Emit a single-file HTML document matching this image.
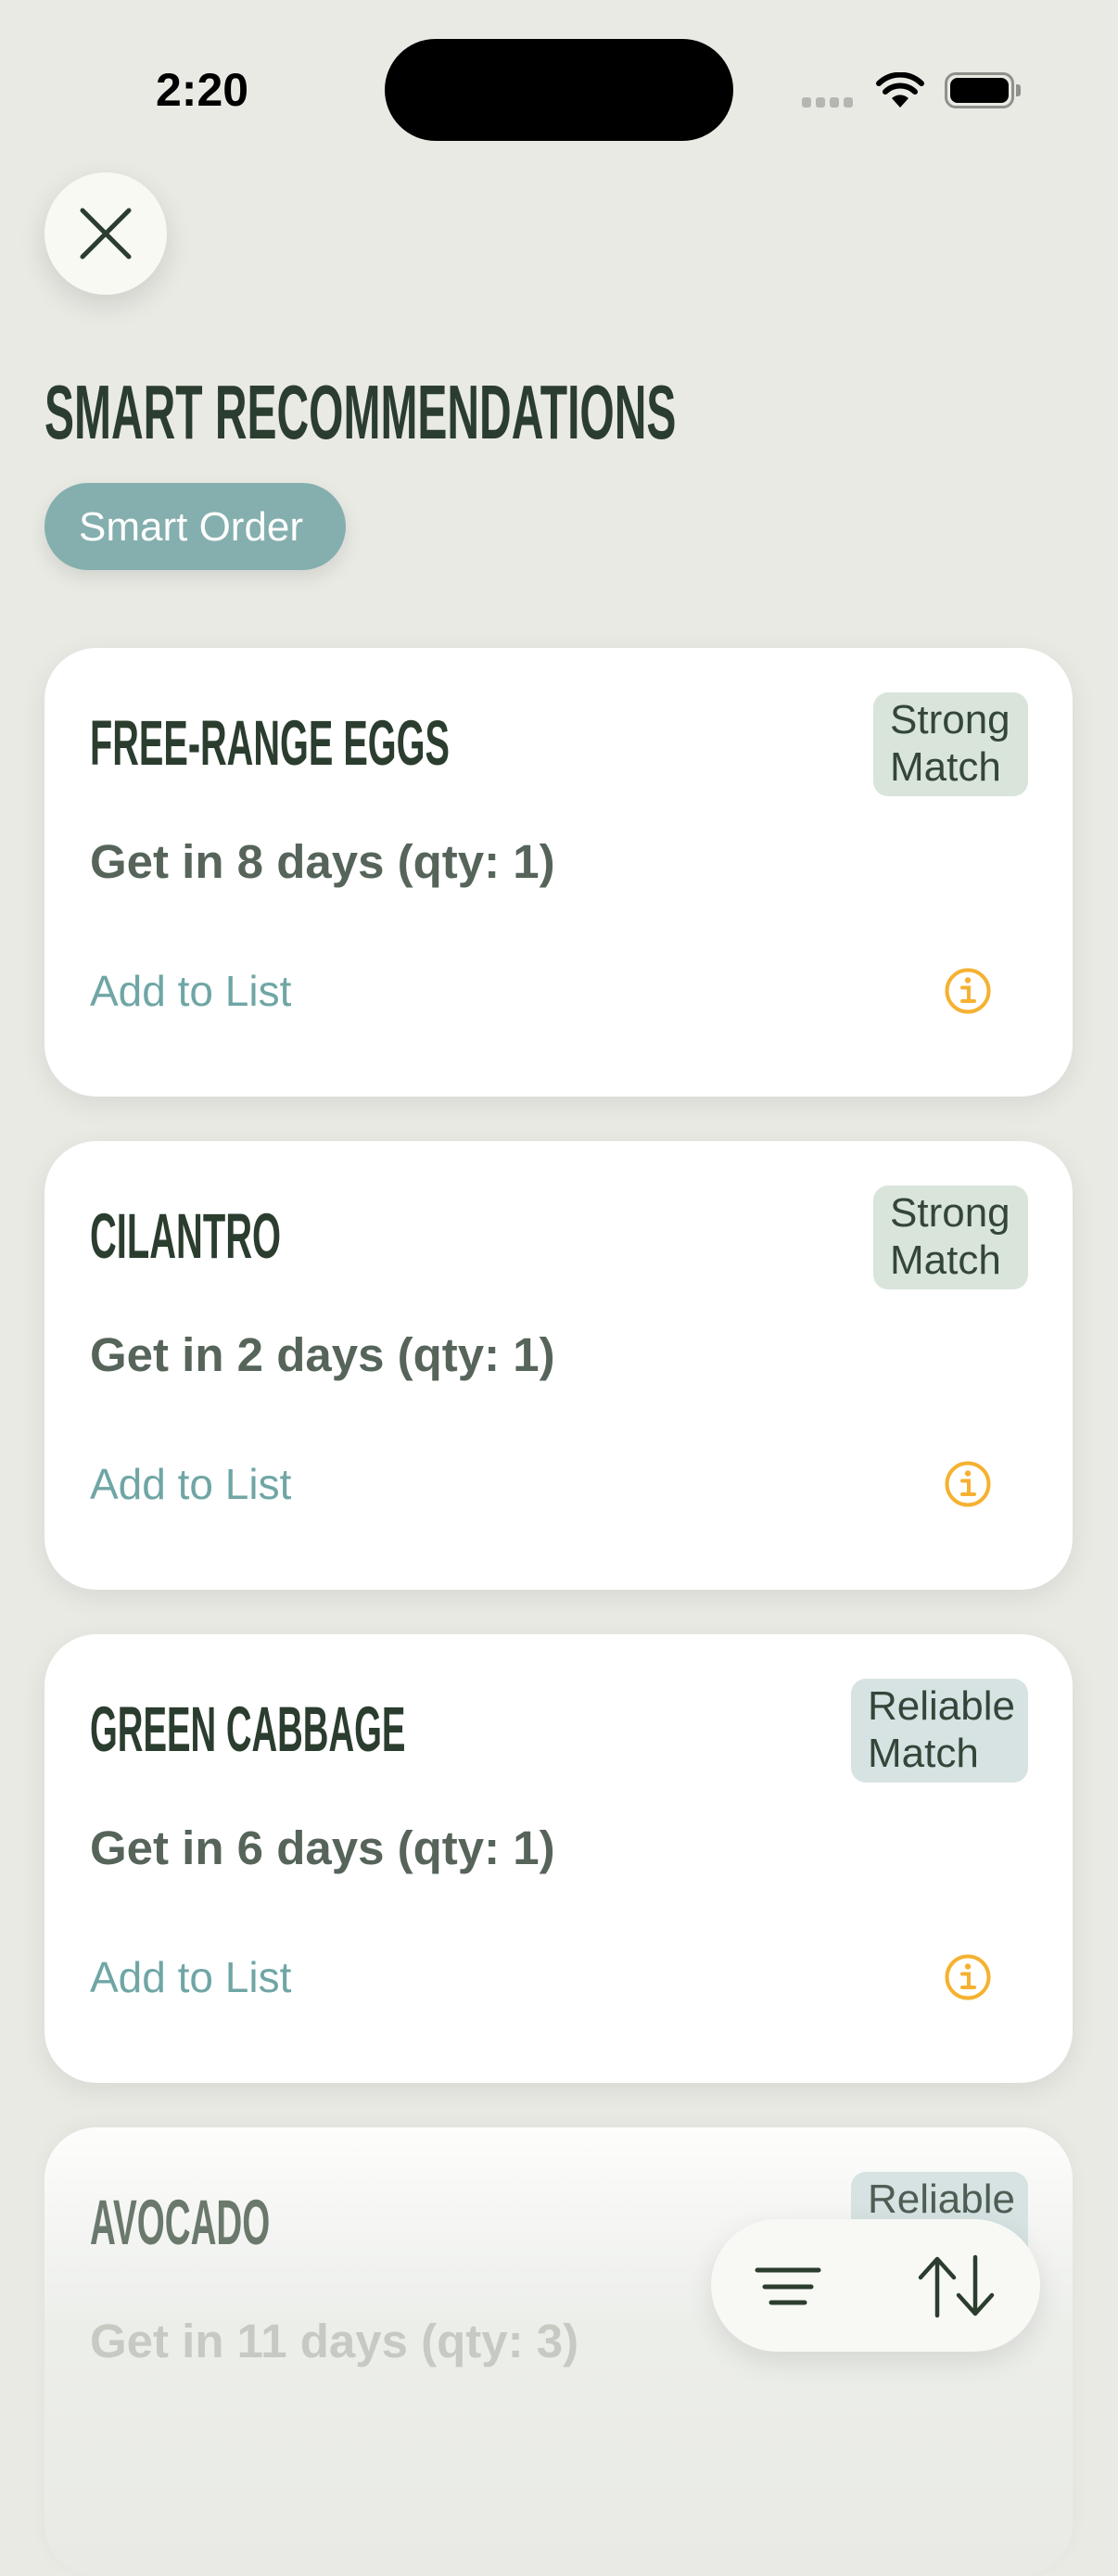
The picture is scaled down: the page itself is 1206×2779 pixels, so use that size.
<!DOCTYPE html>
<html><head><meta charset="utf-8">
<style>
*{margin:0;padding:0;box-sizing:border-box}
html,body{width:1206px;height:2622px;overflow:hidden;background:#e9eae4;font-family:"Liberation Sans",sans-serif}
.abs{position:absolute;line-height:1;white-space:nowrap}
.cond{font-weight:bold;color:#2b3d2e;transform-origin:0 0;display:inline-block}
.card{position:absolute;left:48px;width:1109px;height:484px;border-radius:56px;background:#fff;box-shadow:0 8px 30px rgba(0,0,0,0.08)}
.card .t{position:absolute;left:49px;top:68px;font-size:69px;line-height:1;white-space:nowrap}
.card .g{position:absolute;left:49px;top:205px;font-size:51px;font-weight:bold;color:#56645a;line-height:1;white-space:nowrap}
.card .a{position:absolute;left:49px;top:347px;font-size:46px;color:#6fa6a5;line-height:1;white-space:nowrap}
.badge{position:absolute;top:48px;height:112px;border-radius:16px;background:#d9e4da;padding:4px 0 0 18px;font-size:44px;line-height:51px;color:#34463a}
.badge.r{background:#d6e3e2}
.info{position:absolute;left:971px;top:345px}
</style></head><body>
<div class="abs" style="left:168px;top:72px;font-size:50px;font-weight:bold;color:#000">2:20</div>
<div style="position:absolute;left:415px;top:42px;width:376px;height:110px;border-radius:55px;background:#000"></div>
<div style="position:absolute;left:865px;top:105px;width:10px;height:11px;border-radius:3px;background:#b5b5b2"></div>
<div style="position:absolute;left:880px;top:105px;width:10px;height:11px;border-radius:3px;background:#b5b5b2"></div>
<div style="position:absolute;left:895px;top:105px;width:10px;height:11px;border-radius:3px;background:#b5b5b2"></div>
<div style="position:absolute;left:910px;top:105px;width:10px;height:11px;border-radius:3px;background:#b5b5b2"></div>
<svg style="position:absolute;left:944px;top:78px" width="54" height="40" viewBox="0 0 54 40">
<path d="M27 38 L18 28 A13 13 0 0 1 36 28 Z" fill="#000"/>
<path d="M11 21 A23 23 0 0 1 43 21" stroke="#000" stroke-width="6" fill="none" stroke-linecap="round"/>
<path d="M4 12 A33 33 0 0 1 50 12" stroke="#000" stroke-width="6" fill="none" stroke-linecap="round"/>
</svg>
<div style="position:absolute;left:1019px;top:78px;width:75px;height:39px;border-radius:12px;border:3px solid #8f8f8c"></div>
<div style="position:absolute;left:1025px;top:84px;width:63px;height:27px;border-radius:8px;background:#000"></div>
<div style="position:absolute;left:1096px;top:91px;width:5px;height:13px;border-radius:0 3px 3px 0;background:#8f8f8c"></div>
<div style="position:absolute;left:48px;top:186px;width:132px;height:132px;border-radius:50%;background:#f8f9f3;box-shadow:0 10px 30px rgba(0,0,0,0.12)"></div>
<svg style="position:absolute;left:84px;top:222px" width="60" height="60" viewBox="0 0 60 60"><path d="M5 5 L55 55 M55 5 L5 55" stroke="#2b3d2e" stroke-width="5" stroke-linecap="round"/></svg>
<div class="abs" style="left:48px;top:403px"><span class="cond" style="font-size:83px;transform:scaleX(0.578)">SMART RECOMMENDATIONS</span></div>
<div style="position:absolute;left:48px;top:521px;width:325px;height:94px;border-radius:47px;background:#84afae;box-shadow:0 8px 20px rgba(0,0,0,0.1)"></div>
<div class="abs" style="left:85px;top:547px;font-size:44px;color:#fff">Smart Order</div>

<div class="card" style="top:699px">
 <div class="t"><span class="cond" style="transform:scaleX(0.575)">FREE-RANGE EGGS</span></div>
 <div class="badge" style="left:894px;width:167px">Strong<br>Match</div>
 <div class="g">Get in 8 days (qty: 1)</div>
 <div class="a">Add to List</div>
 <svg class="info" width="50" height="50" viewBox="0 0 50 50"><circle cx="25" cy="25" r="22.5" stroke="#f5b131" stroke-width="4" fill="none"/><circle cx="25" cy="13.5" r="3.2" fill="#f5b131"/><path d="M19 21.5h7v14 M19 36h13" stroke="#f5b131" stroke-width="4" fill="none" stroke-linecap="round"/></svg>
</div>
<div class="card" style="top:1231px">
 <div class="t"><span class="cond" style="transform:scaleX(0.578)">CILANTRO</span></div>
 <div class="badge" style="left:894px;width:167px">Strong<br>Match</div>
 <div class="g">Get in 2 days (qty: 1)</div>
 <div class="a">Add to List</div>
 <svg class="info" width="50" height="50" viewBox="0 0 50 50"><circle cx="25" cy="25" r="22.5" stroke="#f5b131" stroke-width="4" fill="none"/><circle cx="25" cy="13.5" r="3.2" fill="#f5b131"/><path d="M19 21.5h7v14 M19 36h13" stroke="#f5b131" stroke-width="4" fill="none" stroke-linecap="round"/></svg>
</div>
<div class="card" style="top:1763px">
 <div class="t"><span class="cond" style="transform:scaleX(0.555)">GREEN CABBAGE</span></div>
 <div class="badge r" style="left:870px;width:191px">Reliable<br>Match</div>
 <div class="g">Get in 6 days (qty: 1)</div>
 <div class="a">Add to List</div>
 <svg class="info" width="50" height="50" viewBox="0 0 50 50"><circle cx="25" cy="25" r="22.5" stroke="#f5b131" stroke-width="4" fill="none"/><circle cx="25" cy="13.5" r="3.2" fill="#f5b131"/><path d="M19 21.5h7v14 M19 36h13" stroke="#f5b131" stroke-width="4" fill="none" stroke-linecap="round"/></svg>
</div>
<div class="card" style="top:2295px;background:linear-gradient(#fdfdfc,#eceeea 45%,#e9eae5);box-shadow:0 -4px 20px rgba(0,0,0,0.04)">
 <div class="t"><span class="cond" style="transform:scaleX(0.559);color:#6b796d">AVOCADO</span></div>
 <div class="badge r" style="left:870px;width:191px;color:#4f5d55">Reliable<br>Match</div>
 <div class="g" style="color:#c7c9c3">Get in 11 days (qty: 3)</div>
</div>
<div style="position:absolute;left:767px;top:2394px;width:355px;height:143px;border-radius:72px;background:#f8f9f4;box-shadow:0 10px 30px rgba(0,0,0,0.1)"></div>
<svg style="position:absolute;left:800px;top:2420px" width="300" height="100" viewBox="800 2420 300 100">
<path d="M817 2449H883 M825 2467H875 M832 2484H868" stroke="#2b3d2e" stroke-width="5" stroke-linecap="round"/>
<path d="M1011 2498V2437 M993 2457L1011 2437L1029 2457" stroke="#2b3d2e" stroke-width="4.5" fill="none" stroke-linecap="round" stroke-linejoin="round"/>
<path d="M1052 2435V2496 M1034 2476L1052 2496L1070 2476" stroke="#2b3d2e" stroke-width="4.5" fill="none" stroke-linecap="round" stroke-linejoin="round"/>
</svg>
</body></html>
